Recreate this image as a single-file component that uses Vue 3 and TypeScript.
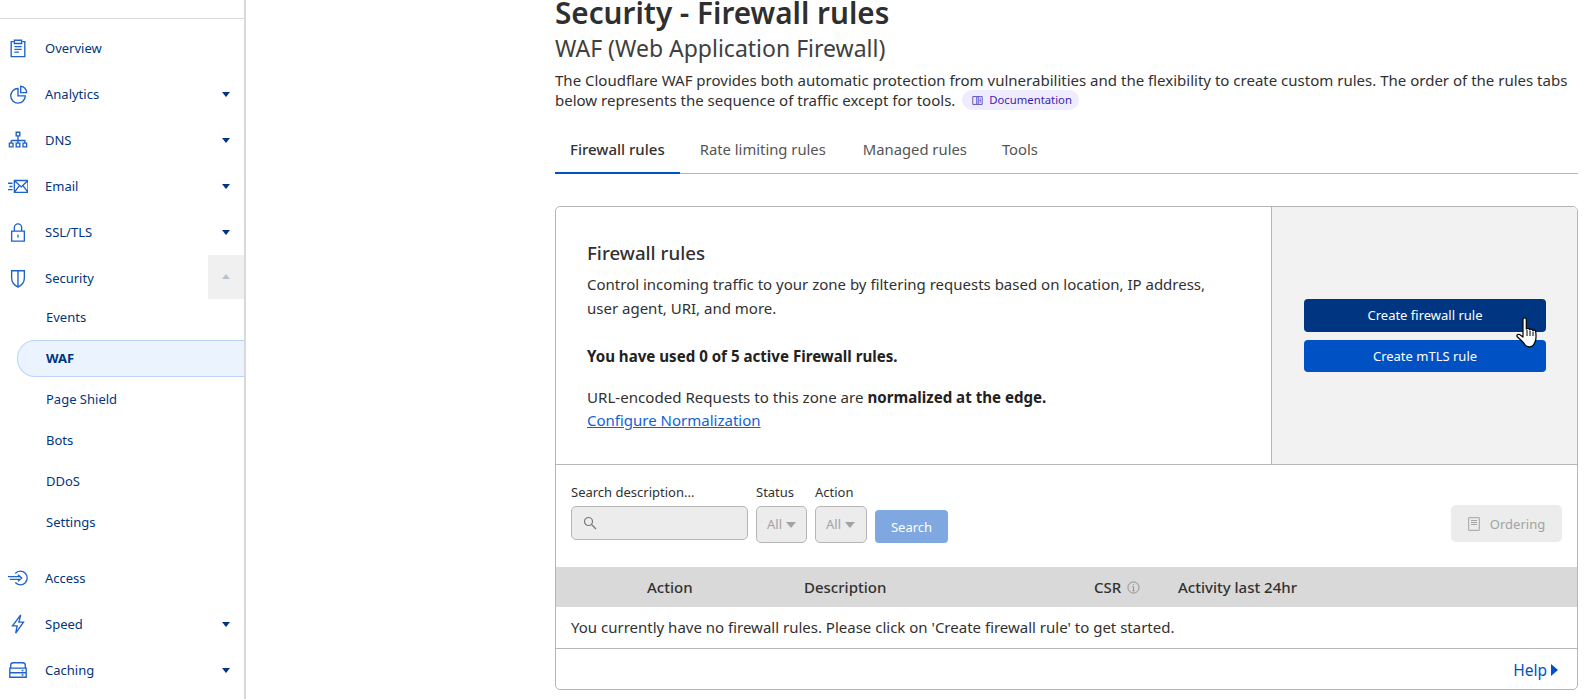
<script setup lang="ts">
interface NavItem { label: string; icon: string; caret?: boolean; open?: boolean }
const top: NavItem[] = [
  { label: 'Overview', icon: 'overview' },
  { label: 'Analytics', icon: 'analytics', caret: true },
  { label: 'DNS', icon: 'dns', caret: true },
  { label: 'Email', icon: 'email', caret: true },
  { label: 'SSL/TLS', icon: 'lock', caret: true },
  { label: 'Security', icon: 'shield', open: true },
]
const subs = ['Events', 'WAF', 'Page Shield', 'Bots', 'DDoS', 'Settings']
const bottom: NavItem[] = [
  { label: 'Access', icon: 'access' },
  { label: 'Speed', icon: 'speed', caret: true },
  { label: 'Caching', icon: 'caching', caret: true },
]
const tabs = ['Firewall rules', 'Rate limiting rules', 'Managed rules', 'Tools']
const iconPaths: Record<string, string> = {
  overview: 'M6 4H3.500v16.500h15V4H16M7 2.500h8v3.500H7zM7 9.500h8M7 12.500h8M7 15.500h5',
  analytics: 'M11 5a8 8 0 1 0 8 8h-8zM14 2.500a7 7 0 0 1 6.500 7H14z',
  dns: 'M9 2.500h4v4H9zM11 6.500v5M3.500 11.500h15v3M3.500 11.500v3M11 11.500v3M1.500 14.500h4v4h-4zM9 14.500h4v4H9zM16.500 14.500h4v4h-4z',
  email: 'M7 5h15v13H7zM7 5l7.500 7L22 5M7 18l5.500-7.500M22 18l-5.500-7.500M0 8h5M1.500 11.500h3.500M0 15h5',
  lock: 'M4 10h14v11H4zM7 10V6a4 4 0 0 1 8 0v4M11 14v3',
  shield: 'M4 3h14v8c0 5-3 8-7 10-4-2-7-5-7-10zM11 3v18',
  access: 'M8 6a7.500 7.500 0 1 1 0 10M0 9.500h14M2 12.500h12M11 7.500L15 11l-4 3.500',
  speed: 'M14 1L5 13h5l-1.500 8L17 9h-5z',
  caching: 'M3 5.500Q3 3 6 3h10q3 0 3 2.500V9H3zM2 9h18v5H2zM2 14h18v5H2zM15 11.500h2M15 16.500h2',
}
</script>

<template>
  <div class="page">
    <aside class="sidebar">
      <div class="side-top"></div>
      <nav class="nav">
        <a v-for="item in top" :key="item.label" class="row">
          <svg class="icon" viewBox="0 0 22 22"><path :d="iconPaths[item.icon]" /></svg>
          <span>{{ item.label }}</span>
          <i v-if="item.caret" class="caret"></i>
          <b v-if="item.open" class="caret-box"><i class="caret up"></i></b>
        </a>
        <div class="subs">
          <a v-for="s in subs" :key="s" class="sub" :class="{ active: s === 'WAF' }">{{ s }}</a>
        </div>
        <a v-for="item in bottom" :key="item.label" class="row">
          <svg class="icon" viewBox="0 0 22 22"><path :d="iconPaths[item.icon]" /></svg>
          <span>{{ item.label }}</span>
          <i v-if="item.caret" class="caret"></i>
        </a>
      </nav>
    </aside>

    <main class="main">
      <h1>Security - Firewall rules</h1>
      <h2>WAF (Web Application Firewall)</h2>
      <p class="intro">
        The Cloudflare WAF provides both automatic protection from vulnerabilities and the flexibility to create custom rules. The order of the rules tabs
        below represents the sequence of traffic except for tools.
        <a class="doc">
          <svg viewBox="0 0 14 14" class="doc-icon"><path d="M1 2h5v10H1zM8 2h5v10H8zM6 2h2M6 12h2M9.500 5h2M9.500 7h2M9.500 9h2" /></svg>
          Documentation
        </a>
      </p>
      <div class="tabs">
        <a v-for="(t, i) in tabs" :key="t" class="tab" :class="{ current: i === 0 }">{{ t }}</a>
      </div>

      <section class="card">
        <div class="hero">
          <div class="hero-text">
            <h3>Firewall rules</h3>
            <p class="desc">Control incoming traffic to your zone by filtering requests based on location, IP address, user agent, URI, and more.</p>
            <p class="used"><strong>You have used 0 of 5 active Firewall rules.</strong></p>
            <p class="norm">URL-encoded Requests to this zone are <strong>normalized at the edge.</strong><br /><a class="link">Configure Normalization</a></p>
          </div>
          <div class="hero-side">
            <button class="btn hover">Create firewall rule</button>
            <button class="btn second">Create mTLS rule</button>
            <svg class="cursor" viewBox="0 0 24 31">
              <path d="M7 2.500c0-2.300 3.300-2.300 3.300 0V12c1.200-1 2.900-.8 3.300.6 1.100-.9 2.800-.5 3.100.8 1.200-.8 2.900-.2 3 1.200.4 3.200.5 7-.3 9.400-.6 2-1.300 3-2.400 4.500-2 1.500-5 1.600-7 .3-1.300-1-2-2.200-3.100-3.800L1.300 19.800c-1.100-1.500.7-3.200 2.300-2.200L7 20z" />
              <path class="cursor-line" d="M11 13v6M14 13.500v5.500M17 14.500v4.500" />
            </svg>
          </div>
        </div>

        <div class="filters">
          <label class="field search-field">
            <span>Search description...</span>
            <span class="input">
              <svg viewBox="0 0 14 14"><circle cx="5.500" cy="5.500" r="4" /><path d="M8.500 8.500l4.500 4.500" /></svg>
            </span>
          </label>
          <label class="field">
            <span>Status</span>
            <span class="select">All<i></i></span>
          </label>
          <label class="field">
            <span>Action</span>
            <span class="select wide">All<i></i></span>
          </label>
          <button class="search-btn">Search</button>
          <button class="ordering">
            <svg viewBox="0 0 12 14"><path d="M.7.700h10.600v12.600H.7zM3 3.500h6M3 5.500h6M3 7.500h6" /></svg>
            Ordering
          </button>
        </div>

        <div class="thead">
          <span>Action</span>
          <span>Description</span>
          <span class="csr">CSR
            <svg viewBox="0 0 14 14"><circle cx="7" cy="7" r="6" /><path d="M7 6v4.500M5.800 10.500h2.400M5.800 6H7M7 3.300v1" /></svg>
          </span>
          <span>Activity last 24hr</span>
        </div>
        <div class="empty">You currently have no firewall rules. Please click on 'Create firewall rule' to get started.</div>
        <div class="foot"><a class="help">Help<i></i></a></div>
      </section>
    </main>
  </div>
</template>

<style>
html, body { margin: 0; background: #fff; overflow: hidden; }
</style>

<style scoped>
.page {
  display: flex;
  height: 699px;
  overflow: hidden;
  font-family: "Noto Sans", "Open Sans", sans-serif;
  font-size: 15px;
  color: #313131;
}
.sidebar { width: 244px; flex: none; border-right: 2px solid #d9d9d9; box-sizing: content-box; }
.side-top { height: 18px; border-bottom: 1px solid #d9d9d9; }
.nav { display: flex; flex-direction: column; padding-top: 6px; }
.row {
  position: relative;
  display: flex;
  align-items: center;
  height: 46px;
  padding-left: 45px;
  color: #003681;
  font-size: 13px;
}
.icon {
  position: absolute;
  left: 8px;
  top: 13px;
  width: 20px;
  height: 20px;
  fill: none;
  stroke: #1f62c9;
  stroke-width: 1.5;
}
.caret {
  position: absolute;
  right: 14px;
  top: 21px;
  border-left: 4.500px solid transparent;
  border-right: 4.500px solid transparent;
  border-top: 5px solid #003681;
}
.caret-box {
  position: absolute;
  right: 0;
  top: 0;
  width: 36px;
  height: 44px;
  background: #f0f0f0;
}
.caret.up {
  top: 19px;
  border-top: 0;
  border-bottom: 5px solid #b9c2cf;
}
.subs { display: flex; flex-direction: column; padding-bottom: 13px; margin-top: -5px; }
.sub {
  display: flex;
  align-items: center;
  height: 41px;
  padding-left: 46px;
  color: #003681;
  font-size: 13px;
  box-sizing: border-box;
}
.sub.active {
  height: 37px;
  margin: 3px 0 1px 17px;
  padding: 0 0 2px 28px;
  font-weight: 700;
  background: #ebf3ff;
  border: 1px solid #b9d5fb;
  border-right: 0;
  border-radius: 18px 0 0 18px;
}
.main { width: 1023px; margin-left: 309px; flex: none; }
h1 { margin: -9px 0 0; font-size: 29.700px; line-height: 44px; font-weight: 600; color: #2f2f2f; height: 44px; }
h2 { margin: -2px 0 0; font-size: 23px; line-height: 30px; font-weight: 400; color: #404040; }
.intro { margin: 7px 0 0; line-height: 20px; font-size: 15.030px; }
.doc {
  display: inline-flex;
  align-items: center;
  gap: 6px;
  height: 20px;
  padding: 0 7px 0 10px;
  margin-left: 3px;
  border-radius: 10px;
  background: #f0ecff;
  color: #3b1fb0;
  font-size: 11.300px;
  vertical-align: top;
}
.doc-icon { width: 11px; height: 11px; fill: none; stroke: #3b30b8; stroke-width: 1; }
.tabs { display: flex; margin-top: 18px; border-bottom: 1px solid #b5b5b5; height: 46px; box-sizing: border-box; }
.tab { padding: 11px 18px 0; color: #555; font-size: 14.800px; line-height: 20px; }
.tab:nth-child(3) { padding: 11px 17px 0 19px; }
.tab.current { color: #313131; font-weight: 500; box-shadow: inset 0 -2px 0 #0051c3; height: 46px; box-sizing: border-box; padding: 11px 15px 0; margin-right: 2px; font-size: 15px; }
.card {
  margin-top: 32px;
  border: 1px solid #b5b5b5;
  border-radius: 5px;
  height: 484px;
  box-sizing: border-box;
  overflow: hidden;
}
.hero { display: flex; height: 258px; border-bottom: 1px solid #b5b5b5; box-sizing: border-box; }
.hero-text { flex: 1; padding: 34px 48px 0 31px; }
h3 { margin: 0; font-size: 18.700px; line-height: 24px; font-weight: 500; color: #313131; }
.desc { margin: 7px 0 0; font-size: 15px; line-height: 24px; }
.used { margin: 24px 0 0; line-height: 24px; font-size: 15.100px; }
.norm { margin: 18px 0 0; line-height: 23px; font-size: 15.100px; }
strong { font-weight: 700; color: #222; }
.link { color: #0f62d6; text-decoration: underline; font-size: 15px; }
.hero-side {
  position: relative;
  width: 306px;
  flex: none;
  box-sizing: border-box;
  background: #f2f2f2;
  border-left: 1px solid #b5b5b5;
  padding: 92px 31px 0 32px;
  display: flex;
  flex-direction: column;
  gap: 8px;
}
.btn {
  height: 33px;
  border: 0;
  border-radius: 4px;
  background: #0051c3;
  color: #fff;
  font: inherit;
  font-size: 13px;
  padding: 0 0 2px;
}
.btn.second { height: 32px; padding: 0; }
.btn.hover { background: #003681; }
.cursor { position: absolute; left: 244px; top: 110px; width: 24px; height: 31px; }
.cursor path { fill: #fff; stroke: #000; stroke-width: 1.2; stroke-linejoin: round; }
.cursor .cursor-line { fill: none; stroke-width: 1; }
.filters { position: relative; display: flex; height: 102px; padding: 19px 15px 0; box-sizing: border-box; gap: 8px; }
.field { display: flex; flex-direction: column; gap: 5px; font-size: 13px; line-height: 17px; color: #313131; }
.search-field { width: 177px; }
.input {
  height: 34px;
  box-sizing: border-box;
  border: 1px solid #b5b5b5;
  border-radius: 5px;
  background: #ececec;
  display: flex;
  align-items: center;
  padding-left: 11px;
}
.input svg { width: 14px; height: 14px; fill: none; stroke: #777; stroke-width: 1.2; }
.select {
  width: 51px;
  height: 37px;
  box-sizing: border-box;
  border: 1px solid #b5b5b5;
  border-radius: 5px;
  background: #ececec;
  color: #a3a3a3;
  display: flex;
  align-items: center;
  padding-left: 10px;
  gap: 4px;
}
.select.wide { width: 52px; }
.select i { border-left: 5px solid transparent; border-right: 5px solid transparent; border-top: 6px solid #a3a3a3; }
.search-btn {
  align-self: flex-start;
  margin-top: 26px;
  width: 73px;
  height: 33px;
  border: 0;
  border-radius: 4px;
  background: #7fa8e1;
  color: #fff;
  font: inherit;
  font-size: 13px;
  padding: 0;
}
.ordering {
  align-self: flex-start;
  margin-top: 21px;
  margin-left: auto;
  width: 111px;
  height: 37px;
  border: 0;
  border-radius: 5px;
  background: #ececec;
  color: #a3a3a3;
  font: inherit;
  font-size: 13px;
  display: flex;
  align-items: center;
  justify-content: center;
  gap: 10px;
  padding: 0;
}
.ordering svg { width: 12px; height: 14px; fill: none; stroke: #a3a3a3; stroke-width: 1; }
.thead {
  display: grid;
  grid-template-columns: 157px 290px 84px 1fr;
  padding-left: 91px;
  height: 40px;
  align-items: center;
  background: #d9d9d9;
  font-weight: 500;
  font-size: 15px;
  color: #313131;
}
.csr { display: flex; align-items: center; gap: 6px; }
.csr svg { width: 13px; height: 13px; fill: none; stroke: #8a8a8a; stroke-width: 1; }
.empty {
  height: 42px;
  box-sizing: border-box;
  border-bottom: 1px solid #b5b5b5;
  padding: 0 0 2px 15px;
  display: flex;
  align-items: center;
  font-size: 15px;
}
.foot { display: flex; justify-content: flex-end; align-items: center; height: 41px; padding-right: 19px; }
.help { display: flex; align-items: center; gap: 4px; color: #0051c3; font-size: 15.500px; }
.help i { border-top: 6.500px solid transparent; border-bottom: 6.500px solid transparent; border-left: 7px solid #0051c3; }
</style>
